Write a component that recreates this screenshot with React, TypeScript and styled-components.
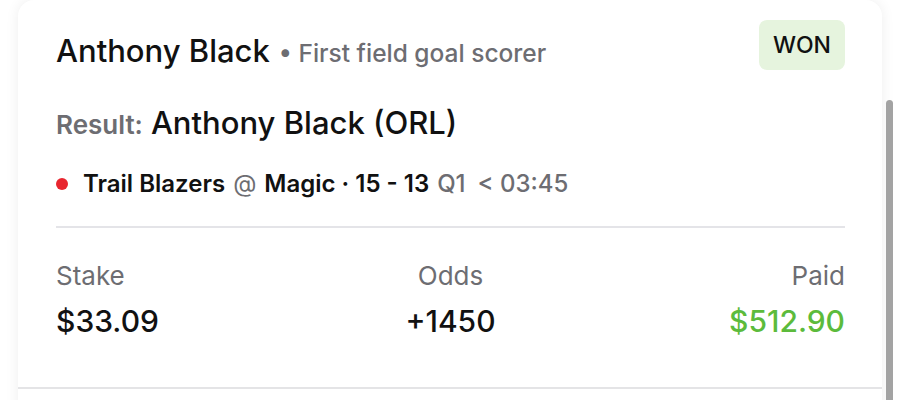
import React from "react";
import styled, { createGlobalStyle } from "styled-components";

const GlobalStyle = createGlobalStyle`
  html, body {
    margin: 0;
    padding: 0;
    background: #ffffff;
    overflow: hidden;
  }
  body {
    font-family: Inter, "Noto Sans", "Liberation Sans", sans-serif;
    color: #111111;
  }
`;

const Page = styled.div`
  width: 900px;
  height: 400px;
  overflow: hidden;
  padding-left: 18px;
  box-sizing: border-box;
  position: relative;
`;

const Card = styled.div`
  width: 864px;
  height: 460px;
  background: #ffffff;
  border-radius: 16px 16px 0 0;
  box-shadow: 0 0 14px rgba(0, 0, 0, 0.07);
`;

const BetSection = styled.div`
  padding: 20px 37px 0 38px;
  height: 389px;
  box-sizing: border-box;
  border-bottom: 2px solid #e4e4e6;
`;

const TopRow = styled.div`
  display: flex;
  justify-content: space-between;
  align-items: flex-start;
  height: 50px;
`;

const Title = styled.div`
  display: flex;
  align-items: baseline;
  gap: 9px;
  margin-top: 13px;
  height: 36px;
  line-height: 36px;
`;

const Name = styled.span`
  font-size: 31px;
  font-weight: 500;
  color: #111;
`;

const Market = styled.span`
  font-size: 24.5px;
  font-weight: 500;
  color: #6d6d72;
`;

const Badge = styled.div<{ tone: "won" | "lost" }>`
  height: 50px;
  padding: 0 14px;
  display: flex;
  align-items: center;
  border-radius: 8px;
  font-size: 23px;
  font-weight: 500;
  background: ${(p) => (p.tone === "won" ? "#e6f4de" : "#fbe3e3")};
  color: #111;
`;

const ResultLine = styled.div`
  display: flex;
  align-items: baseline;
  gap: 8px;
  margin-top: 35px;
  height: 36px;
  line-height: 36px;
`;

const ResultLabel = styled.span`
  font-size: 26px;
  font-weight: 600;
  color: #6d6d72;
`;

const ResultValue = styled.span`
  font-size: 31px;
  font-weight: 500;
  color: #111;
`;

const GameLine = styled.div`
  display: flex;
  align-items: center;
  gap: 8px;
  margin-top: 28px;
  height: 30px;
  font-size: 24px;
  line-height: 30px;
  font-weight: 600;
`;

const LiveDot = styled.span`
  width: 12px;
  height: 12px;
  border-radius: 50%;
  background: #e8262f;
  margin-right: 7px;
`;

const Muted = styled.span<{ weight?: number; gapBefore?: number }>`
  color: #6d6d72;
  font-weight: ${(p) => p.weight ?? 500};
  margin-left: ${(p) => p.gapBefore ?? 0}px;
`;

const Divider = styled.div`
  height: 2px;
  background: #e4e4e8;
  margin-top: 27px;
`;

const Stats = styled.div`
  display: grid;
  grid-template-columns: 1fr 1fr 1fr;
  margin-top: 32px;
`;

const Stat = styled.div<{ align: "left" | "center" | "right" }>`
  display: flex;
  flex-direction: column;
  gap: 11px;
  text-align: ${(p) => p.align};
`;

const StatLabel = styled.span`
  font-size: 26px;
  line-height: 32px;
  font-weight: 400;
  color: #6d6d72;
`;

const StatValue = styled.span<{ positive?: boolean }>`
  font-size: 30px;
  line-height: 36px;
  font-weight: 500;
  color: ${(p) => (p.positive ? "#5cbb3c" : "#111")};
`;

const ScrollThumb = styled.div`
  position: absolute;
  right: 7px;
  top: 100px;
  width: 7px;
  height: 320px;
  border-radius: 4px;
  background: #a3a3a3;
`;

export default function App() {
  return (
    <>
      <GlobalStyle />
      <Page>
        <Card>
          <BetSection>
            <TopRow>
              <Title>
                <Name>Anthony Black</Name>
                <Market>• First field goal scorer</Market>
              </Title>
              <Badge tone="won">WON</Badge>
            </TopRow>
            <ResultLine>
              <ResultLabel>Result:</ResultLabel>
              <ResultValue>Anthony Black (ORL)</ResultValue>
            </ResultLine>
            <GameLine>
              <LiveDot />
              <span>Trail Blazers</span>
              <Muted weight={400}>@</Muted>
              <span>Magic · 15 - 13</span>
              <Muted>Q1</Muted>
              <Muted gapBefore={4}>&lt; 03:45</Muted>
            </GameLine>
            <Divider />
            <Stats>
              <Stat align="left">
                <StatLabel>Stake</StatLabel>
                <StatValue>$33.09</StatValue>
              </Stat>
              <Stat align="center">
                <StatLabel>Odds</StatLabel>
                <StatValue>+1450</StatValue>
              </Stat>
              <Stat align="right">
                <StatLabel>Paid</StatLabel>
                <StatValue positive>$512.90</StatValue>
              </Stat>
            </Stats>
          </BetSection>
        </Card>
        <ScrollThumb />
      </Page>
    </>
  );
}
